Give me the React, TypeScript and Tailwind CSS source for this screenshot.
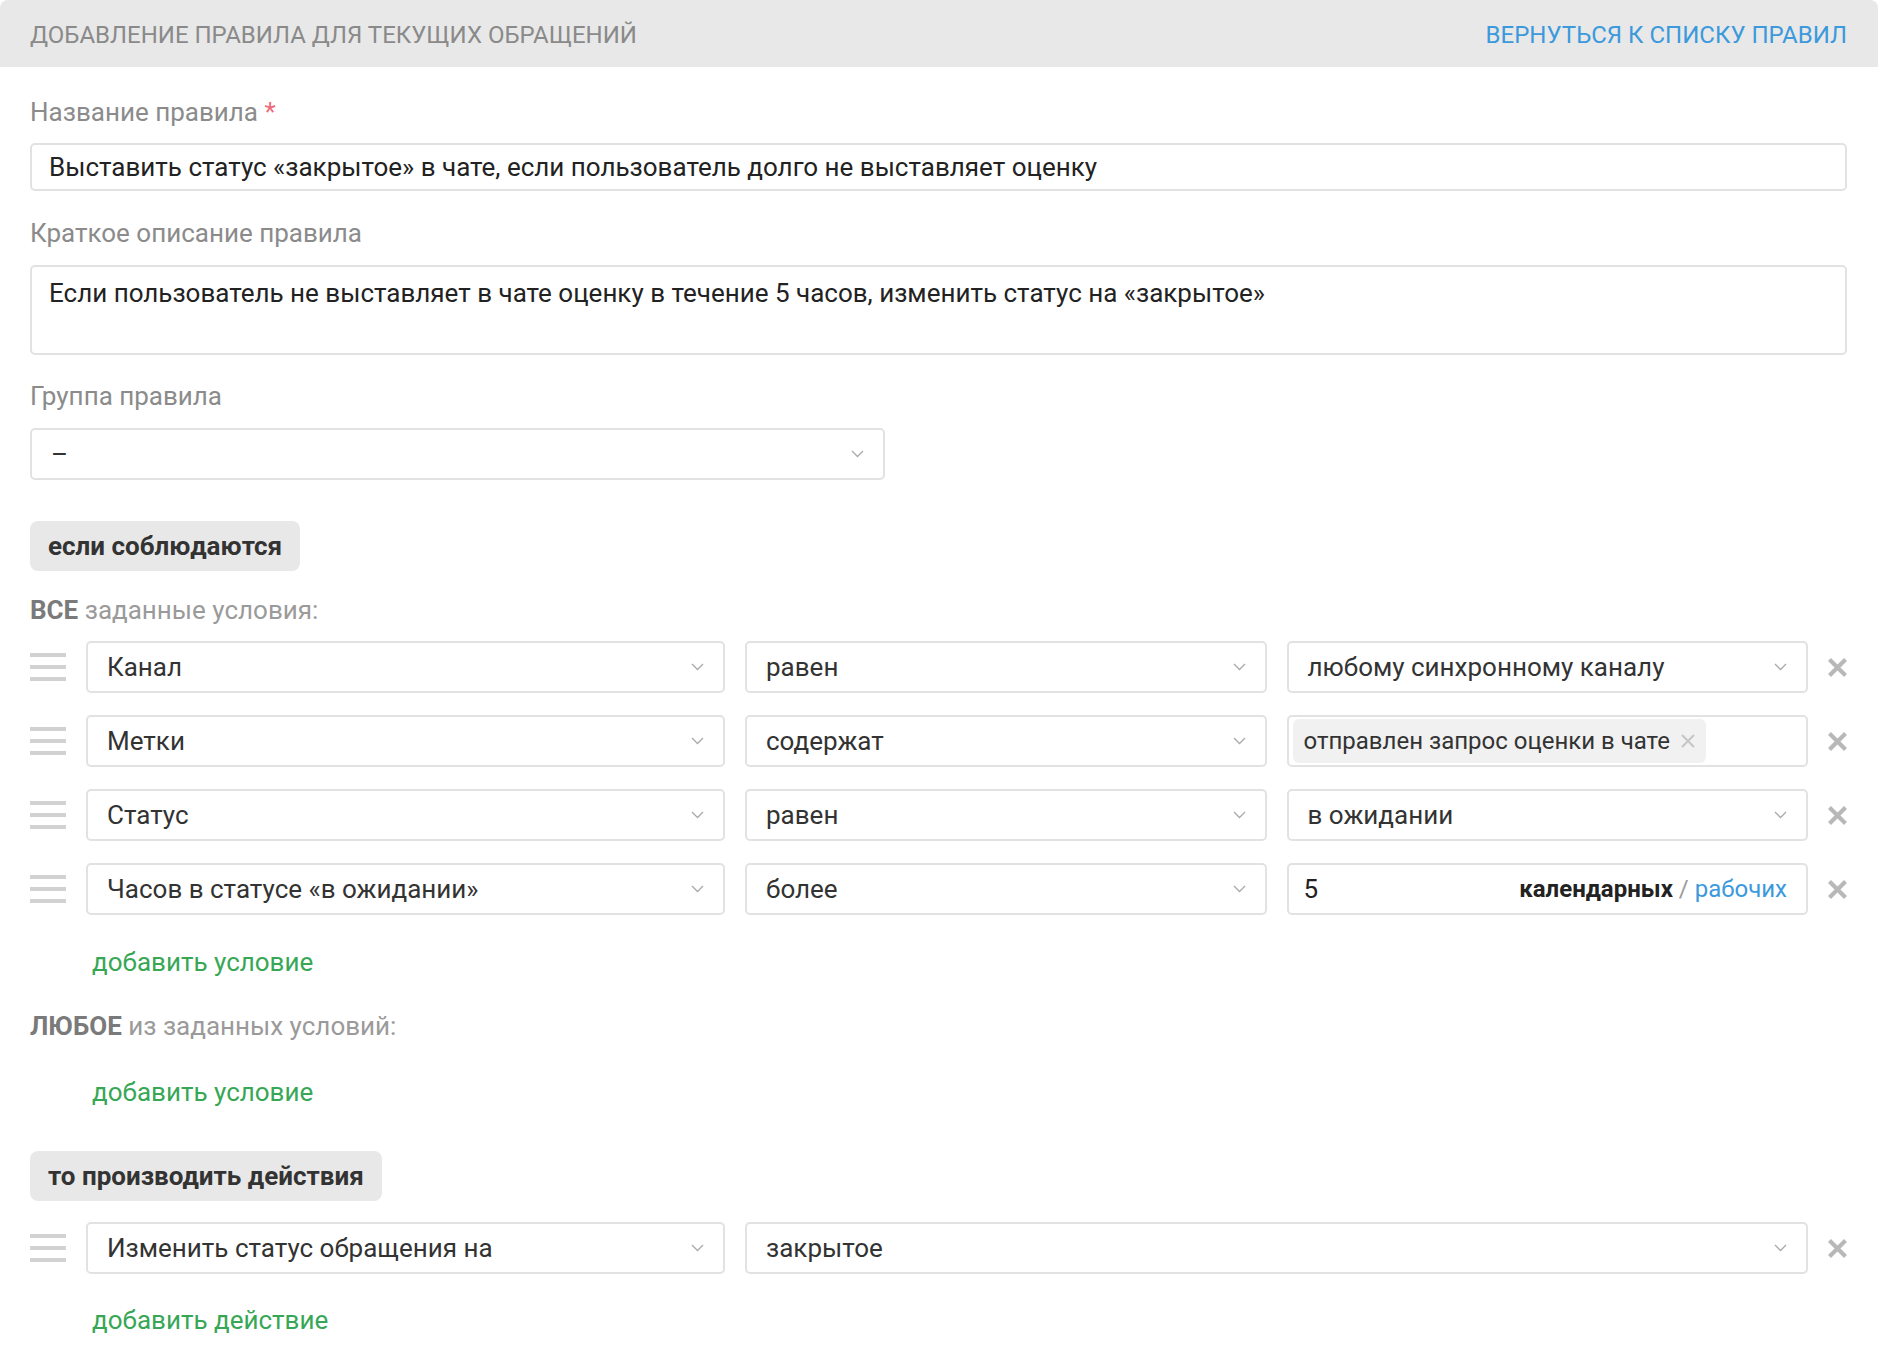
import React from 'react';

const green = 'text-[#37a756]';

function Chevron() {
  return (
    <svg width="13" height="8" viewBox="0 0 13 8" className="shrink-0">
      <polyline points="1,1 6.5,6.5 12,1" fill="none" stroke="#a9a9a9" strokeWidth="1.3" />
    </svg>
  );
}

function DragHandle() {
  return (
    <div className="flex w-[36px] flex-col gap-[8px]">
      <span className="h-[4px] w-full bg-[#d2d2d2]" />
      <span className="h-[4px] w-full bg-[#d2d2d2]" />
      <span className="h-[4px] w-full bg-[#d2d2d2]" />
    </div>
  );
}

function RemoveButton() {
  return (
    <button className="ml-[19px] flex h-[22px] w-[21px] shrink-0 items-center justify-center">
      <svg width="21" height="21" viewBox="0 0 21 21">
        <path d="M2.5 2.5 L18.5 18.5 M18.5 2.5 L2.5 18.5" stroke="#b8b8b8" strokeWidth="4.2" />
      </svg>
    </button>
  );
}

function Select({ value, className = '' }: { value: string; className?: string }) {
  return (
    <div
      className={`flex h-[52px] items-center justify-between rounded-[5px] border-2 border-[#e2e2e2] bg-white pl-[19px] pr-[19px] text-[#333] ${className}`}
    >
      <span>{value}</span>
      <Chevron />
    </div>
  );
}

function Box({ children, className = '' }: { children: React.ReactNode; className?: string }) {
  return (
    <div className={`flex h-[52px] items-center rounded-[5px] border-2 border-[#e2e2e2] bg-white ${className}`}>
      {children}
    </div>
  );
}

function Row({ children }: { children: React.ReactNode }) {
  return (
    <div className="flex items-center">
      <div className="grid flex-1 grid-cols-[36px_639px_1fr_1fr] items-center gap-x-[20px]">
        <DragHandle />
        {children}
      </div>
      <RemoveButton />
    </div>
  );
}

function SectionTag({ children }: { children: React.ReactNode }) {
  return (
    <div className="inline-flex h-[50px] items-center rounded-[8px] bg-[#e8e8e8] px-[18px] font-bold text-[#333]">
      {children}
    </div>
  );
}

function Label({ children }: { children: React.ReactNode }) {
  return <div className="text-[#8b8b8b]">{children}</div>;
}

export default function App() {
  return (
    <div className="min-h-screen bg-white font-['Roboto',sans-serif] text-[26px] leading-[30px]">
      <header className="flex h-[67px] items-center justify-between rounded-t-[8px] bg-[#e8e8e8] pl-[30px] pr-[31px] pt-[3px] text-[24px]">
        <span className="uppercase text-[#8a8a8a]">Добавление правила для текущих обращений</span>
        <a className="uppercase text-[#3b99dc]">Вернуться к списку правил</a>
      </header>

      <main className="pl-[30px] pr-[30px]">
        <div className="pt-[30px]">
          <Label>
            Название правила <span className="text-[#f06a7a]">*</span>
          </Label>
          <div className="mt-[16px] mr-[1px] flex h-[48px] items-center rounded-[5px] border-2 border-[#e2e2e2] px-[17px] text-[#222]">
            Выставить статус «закрытое» в чате, если пользователь долго не выставляет оценку
          </div>
        </div>

        <div className="pt-[27px]">
          <Label>Краткое описание правила</Label>
          <div className="mt-[17px] mr-[1px] h-[90px] rounded-[5px] border-2 border-[#e2e2e2] px-[17px] pt-[11px] text-[#222]">
            Если пользователь не выставляет в чате оценку в течение 5 часов, изменить статус на «закрытое»
          </div>
        </div>

        <div className="pt-[26px]">
          <Label>Группа правила</Label>
          <Select value="–" className="mt-[17px] w-[855px] pl-[17px]" />
        </div>

        <div className="pt-[41px]">
          <SectionTag>если соблюдаются</SectionTag>
        </div>

        <div className="pt-[24px] text-[#9a9a9a]">
          <b className="font-bold text-[#7a7a7a]">ВСЕ</b> заданные условия:
        </div>

        <div className="mt-[16px] flex flex-col gap-[22px]">
          <Row>
            <Select value="Канал" />
            <Select value="равен" />
            <Select value="любому синхронному каналу" />
          </Row>
          <Row>
            <Select value="Метки" />
            <Select value="содержат" />
            <Box className="pl-[4px]">
              <span className="flex h-[44px] items-center gap-[11px] rounded-[6px] bg-[#f1f1f1] pl-[11px] pr-[11px] text-[24px] text-[#333]">
                отправлен запрос оценки в чате
                <svg width="14" height="14" viewBox="0 0 14 14">
                  <path d="M1 1 L13 13 M13 1 L1 13" stroke="#c4c4c4" strokeWidth="1.8" />
                </svg>
              </span>
            </Box>
          </Row>
          <Row>
            <Select value="Статус" />
            <Select value="равен" />
            <Select value="в ожидании" />
          </Row>
          <Row>
            <Select value="Часов в статусе «в ожидании»" />
            <Select value="более" />
            <Box className="justify-between pl-[15px] pr-[19px]">
              <span className="text-[#222]">5</span>
              <span className="text-[24px]">
                <b className="font-bold text-[#222]">календарных</b>
                <span className="text-[#9a9a9a]"> / </span>
                <span className="text-[#3b99dc]">рабочих</span>
              </span>
            </Box>
          </Row>
        </div>

        <div className={`pl-[62px] pt-[32px] ${green}`}>добавить условие</div>

        <div className="pt-[34px] text-[#9a9a9a]">
          <b className="font-bold text-[#7a7a7a]">ЛЮБОЕ</b> из заданных условий:
        </div>

        <div className={`pl-[62px] pt-[36px] ${green}`}>добавить условие</div>

        <div className="pt-[44px]">
          <SectionTag>то производить действия</SectionTag>
        </div>

        <div className="mt-[21px]">
          <Row>
            <Select value="Изменить статус обращения на" />
            <Select value="закрытое" className="col-span-2" />
          </Row>
        </div>

        <div className={`pl-[62px] pt-[31px] pb-[40px] ${green}`}>добавить действие</div>
      </main>
    </div>
  );
}
